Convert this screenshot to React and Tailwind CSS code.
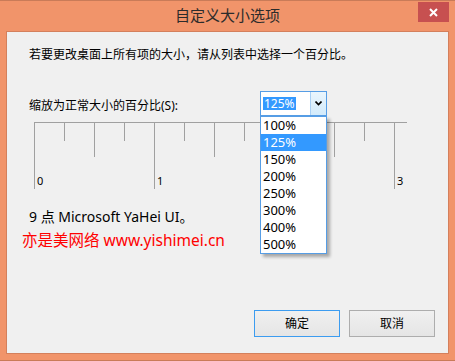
import React from 'react'

const sans = { fontFamily: '"Segoe UI", "Noto Sans", "Noto Sans CJK SC", sans-serif' }

const sizes = ['100%', '125%', '150%', '200%', '250%', '300%', '400%', '500%']

const Ruler = () => {
  const major = [0, 120, 240, 360]
  const half = [60, 180, 300]
  const quarter = [30, 90, 150, 210, 270, 330]
  // the "2" label is hidden behind the open list, so only 0, 1 and 3 are drawn
  const labels = [
    ['0', 0],
    ['1', 120],
    ['3', 360],
  ]
  return (
    <svg width="380" height="70" className="block">
      <line x1="0" y1="1.5" x2="373" y2="1.5" stroke="#a0a0a0" />
      {major.map((x) => (
        <line key={'m' + x} x1={x + 0.5} y1="1" x2={x + 0.5} y2="68" stroke="#a0a0a0" />
      ))}
      {half.map((x) => (
        <line key={'h' + x} x1={x + 0.5} y1="1" x2={x + 0.5} y2="36" stroke="#a0a0a0" />
      ))}
      {quarter.map((x) => (
        <line key={'q' + x} x1={x + 0.5} y1="1" x2={x + 0.5} y2="20" stroke="#a0a0a0" />
      ))}
      {labels.map(([t, x]) => (
        <text key={t} x={x + 3} y="64" fontSize="11" fill="#000" style={sans}>
          {t}
        </text>
      ))}
    </svg>
  )
}

const Combo = () => (
  <div className="relative w-[67px] h-[25px]">
    <div className="flex h-full border border-[#569de5] bg-white">
      <div className="flex-1 flex items-center pl-[2px]">
        <span className="bg-[#3399ff] text-white text-[12px] leading-[13px] px-[1px]">125%</span>
      </div>
      <div className="w-[16px] border-l border-[#a9d0f5] bg-gradient-to-b from-[#eaf6fd] to-[#d2eafb] flex items-center justify-center">
        <svg width="7" height="5" viewBox="0 0 7 5">
          <path d="M0.5 0.5 L3.5 3.5 L6.5 0.5" stroke="#000" strokeWidth="1.6" fill="none" />
        </svg>
      </div>
    </div>
    {/* open dropdown list */}
    <div className="absolute left-0 top-[25px] w-[67px] bg-white border border-[#569de5] shadow-[3px_3px_3px_rgba(0,0,0,0.3)] z-10">
      {sizes.map((s) => (
        <div
          key={s}
          className={
            s === '125%'
              ? 'h-[17px] pl-[2px] text-[13px] leading-[17px] bg-[#3399ff] text-white'
              : 'h-[17px] pl-[2px] text-[13px] leading-[17px] text-black'
          }
        >
          {s}
        </div>
      ))}
    </div>
  </div>
)

export default function App() {
  return (
    <div className="w-[455px] h-[361px] bg-[#f1946a] border-t border-b border-[#c97b58] flex flex-col" style={sans}>
      {/* title bar */}
      <div className="relative h-[30px] flex items-center justify-center">
        <span className="text-[15px] text-[#2b2b2b] -mt-[2px]">自定义大小选项</span>
        <div className="absolute right-[6px] top-[1px] w-[31px] h-[20px] bg-[#c75050] flex items-center justify-center">
          <svg width="9" height="9" viewBox="0 0 9 9">
            <path d="M1 1 L8 8 M8 1 L1 8" stroke="#fff" strokeWidth="2" />
          </svg>
        </div>
      </div>

      {/* client area */}
      <div className="mx-[6px] h-[323px] border border-[#d4805c] bg-[#f0f0f0] flex flex-col">
        <p className="mt-[13px] ml-[22px] text-[12px] leading-[20px] text-black">
          若要更改桌面上所有项的大小，请从列表中选择一个百分比。
        </p>

        <div className="mt-[26px] ml-[22px] flex items-start">
          <span className="mt-[5px] text-[12px] leading-[20px] text-black w-[231px]">缩放为正常大小的百分比(S):</span>
          <Combo />
        </div>

        <div className="ml-[27px] mt-[5px]">
          <Ruler />
        </div>

        <p className="mt-[16px] ml-[22px] text-[14px] leading-[20px] text-black">9 点 Microsoft YaHei UI。</p>
        <p className="mt-[3px] ml-[15px] text-[15.5px] leading-[20px] text-[#ff0000]">亦是美网络 www.yishimei.cn</p>

        <div className="mt-auto mb-[16px] mr-[13px] flex justify-end gap-[9px]">
          <button className="w-[86px] h-[27px] border border-[#3c9cf0] bg-gradient-to-b from-[#f0f0f0] to-[#e5e5e5] text-[12px] text-black">
            确定
          </button>
          <button className="w-[86px] h-[27px] border border-[#adadad] bg-gradient-to-b from-[#f0f0f0] to-[#e5e5e5] text-[12px] text-black">
            取消
          </button>
        </div>
      </div>
    </div>
  )
}
